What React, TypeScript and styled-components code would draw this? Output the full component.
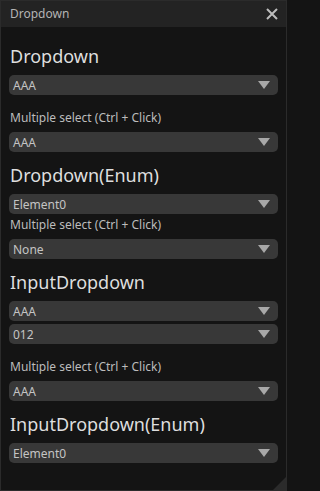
import React from 'react'
import styled, { createGlobalStyle } from 'styled-components'

const GlobalStyle = createGlobalStyle`
  html, body {
    margin: 0;
    padding: 0;
    background: #141414;
  }
  * {
    box-sizing: border-box;
  }
`

const Window = styled.div`
  position: relative;
  width: 287px;
  height: 491px;
  display: flex;
  flex-direction: column;
  background: #141414;
  border: 1px solid #2b2b2b;
  font-family: 'Noto Sans', 'Open Sans', sans-serif;
  overflow: hidden;
`

const TitleBar = styled.div`
  height: 26px;
  flex-shrink: 0;
  display: flex;
  align-items: center;
  justify-content: space-between;
  padding: 0 6px 0 9px;
  background: #232323;
`

const Title = styled.span`
  font-size: 12px;
  line-height: 16px;
  color: #b4b4b4;
`

const CloseButton = styled.button`
  width: 16px;
  height: 16px;
  padding: 0;
  border: none;
  background: transparent;
  display: flex;
  align-items: center;
  justify-content: center;
  cursor: pointer;
`

const Content = styled.div`
  flex: 1;
  display: flex;
  flex-direction: column;
  gap: 3px;
  padding: 9px 8px 0 8px;
`

const Heading = styled.div`
  margin: 8px 0 4px 1px;
  font-size: 18px;
  line-height: 24px;
  color: #dedede;
`

const Label = styled.div`
  margin: 0 0 3px 1px;
  font-size: 12px;
  line-height: 16px;
  color: #bcbcbc;
`

const Spacer = styled.div<{ $size: number }>`
  height: ${({ $size }) => $size}px;
  flex-shrink: 0;
`

const Select = styled.div`
  height: 20px;
  flex-shrink: 0;
  display: flex;
  align-items: center;
  justify-content: space-between;
  padding: 0 8px 0 4px;
  background: #383838;
  border-radius: 5px;
  font-size: 12px;
  color: #c4c4c4;
  cursor: pointer;
`

const Arrow = styled.span`
  width: 0;
  height: 0;
  border-left: 6px solid transparent;
  border-right: 6px solid transparent;
  border-top: 8px solid #a8a8a8;
`

const ResizeGrip = styled.svg`
  position: absolute;
  right: -1px;
  bottom: -1px;
`

const Dropdown: React.FC<{ value: string }> = ({ value }) => (
  <Select>
    <span>{value}</span>
    <Arrow />
  </Select>
)

export default function App() {
  return (
    <>
      <GlobalStyle />
      <Window>
        <TitleBar>
          <Title>Dropdown</Title>
          <CloseButton>
            <svg width="12" height="12" viewBox="0 0 12 12">
              <path d="M1 1L11 11M11 1L1 11" stroke="#bdbdbd" strokeWidth="2" />
            </svg>
          </CloseButton>
        </TitleBar>
        <Content>
          <Heading>Dropdown</Heading>
          <Dropdown value="AAA" />
          <Spacer $size={9} />
          <Label>Multiple select (Ctrl + Click)</Label>
          <Dropdown value="AAA" />

          <Heading>Dropdown(Enum)</Heading>
          <Dropdown value="Element0" />
          <Label>Multiple select (Ctrl + Click)</Label>
          <Dropdown value="None" />

          <Heading>InputDropdown</Heading>
          <Dropdown value="AAA" />
          <Dropdown value="012" />
          <Spacer $size={9} />
          <Label>Multiple select (Ctrl + Click)</Label>
          <Dropdown value="AAA" />

          <Heading>InputDropdown(Enum)</Heading>
          <Dropdown value="Element0" />
        </Content>
        <ResizeGrip width="15" height="15" viewBox="0 0 15 15">
          <path d="M15 0L15 15L0 15Z" fill="#2b2b2b" />
        </ResizeGrip>
      </Window>
    </>
  )
}
